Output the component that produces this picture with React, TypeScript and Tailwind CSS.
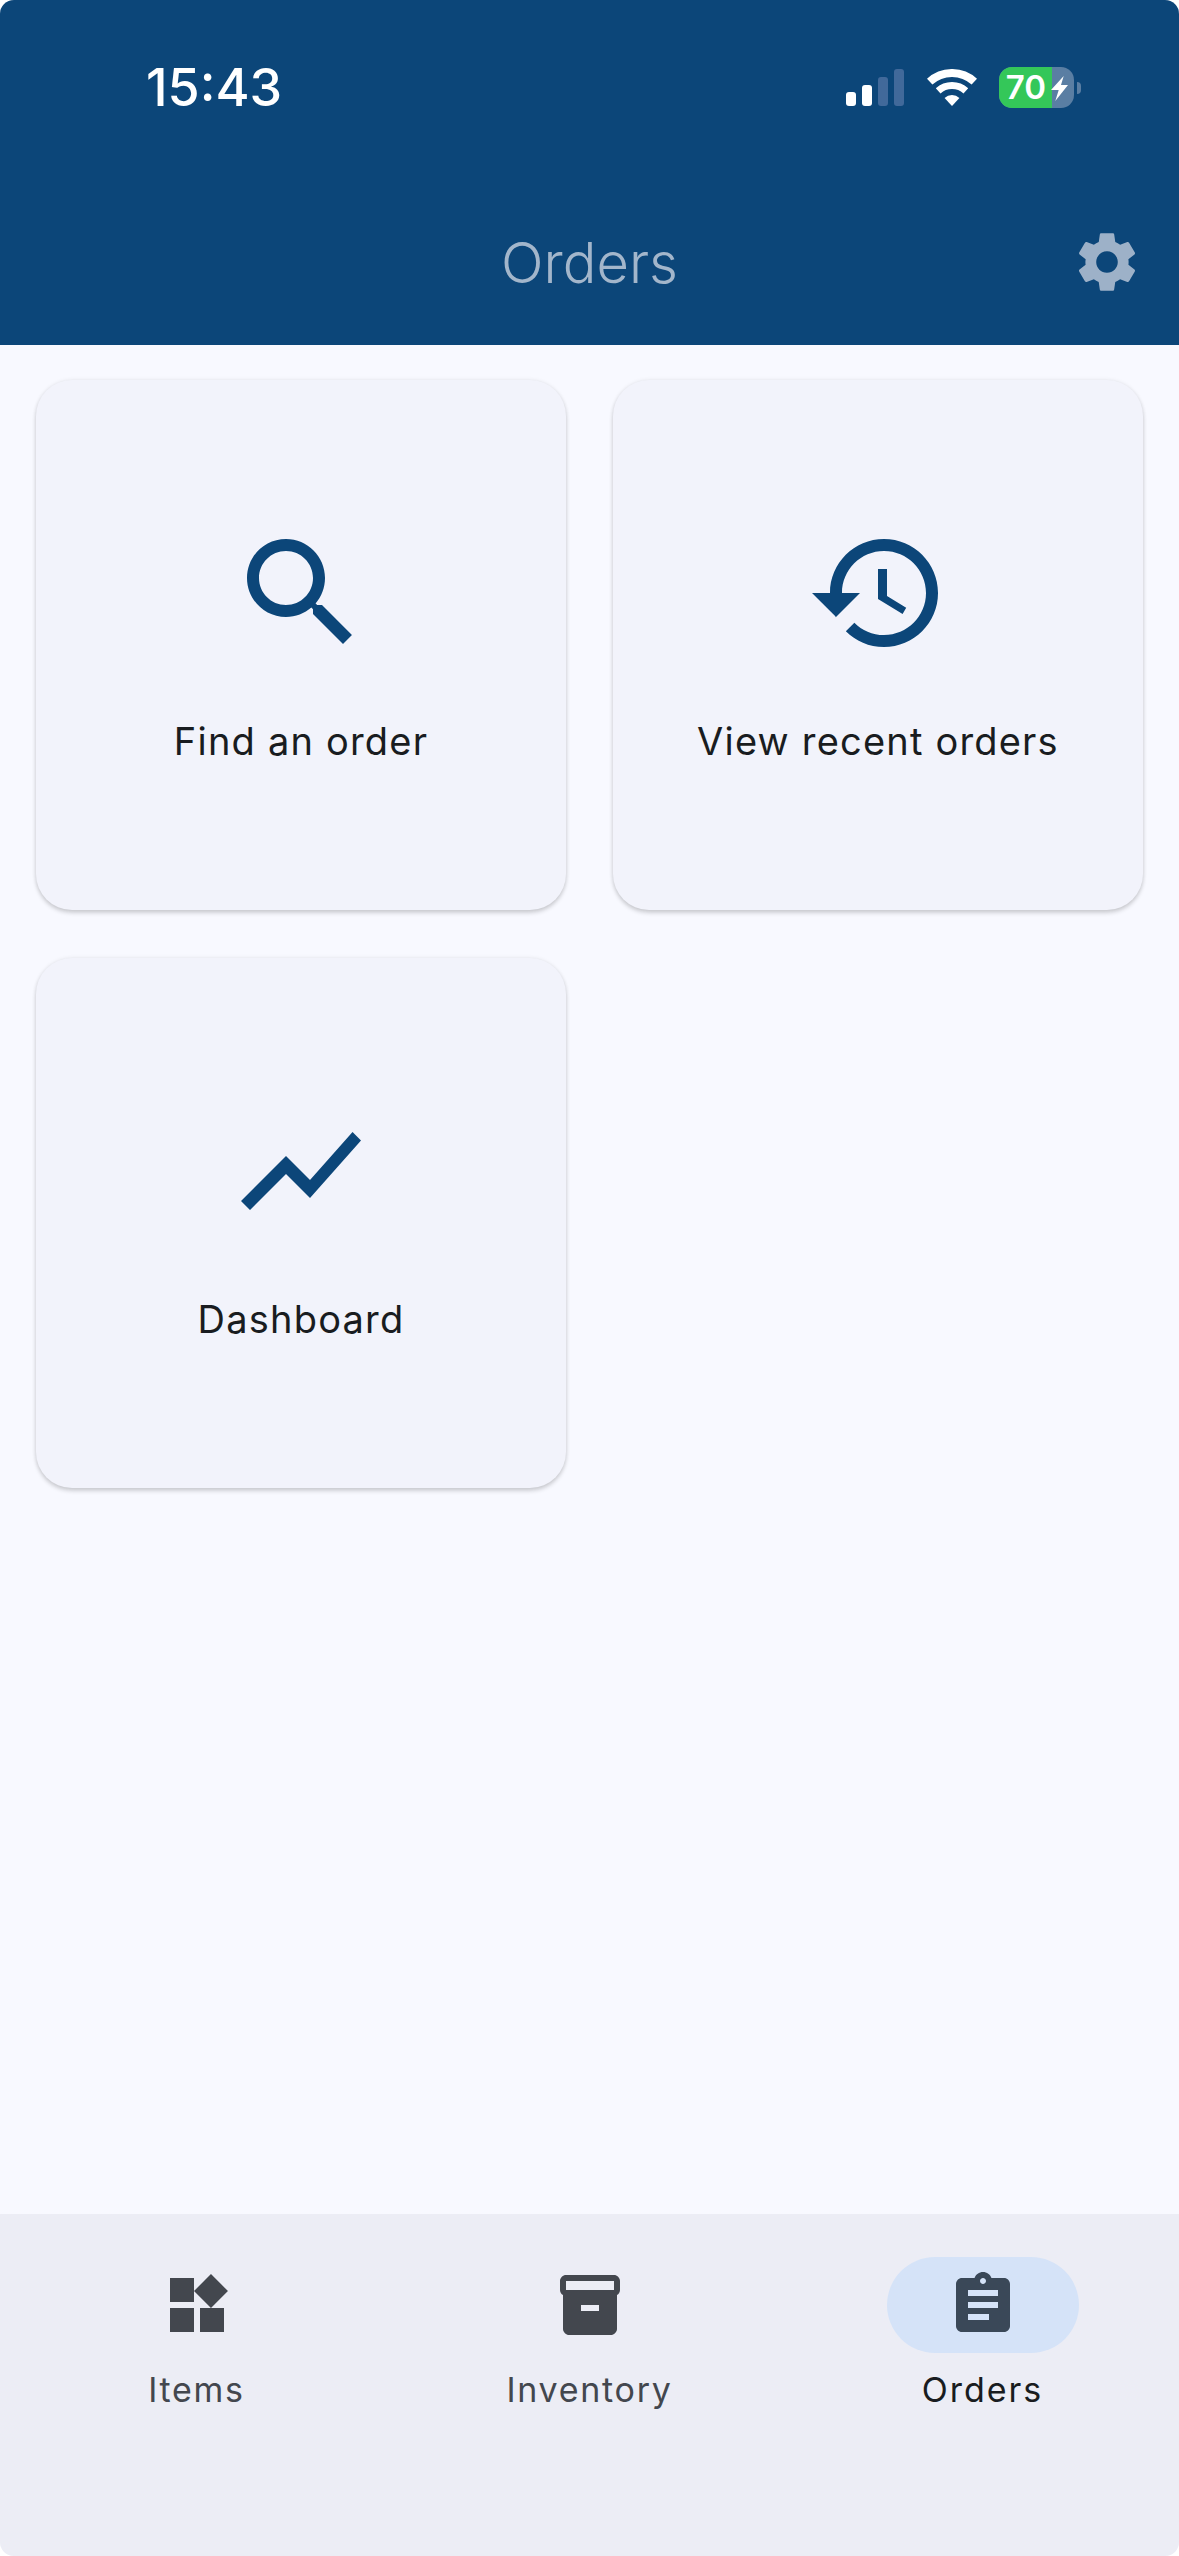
const BLUE = '#0C4679';

const HubIcon = ({ path, className }: { path: string; className: string }) => (
  <svg viewBox="0 0 24 24" className={className} fill="currentColor">
    <path d={path} />
  </svg>
);

const paths = {
  gear: 'M19.14 12.94c.04-.3.06-.61.06-.94 0-.32-.02-.64-.07-.94l2.03-1.58c.18-.14.23-.41.12-.61l-1.92-3.32c-.12-.22-.37-.29-.59-.22l-2.39.96c-.5-.38-1.03-.7-1.62-.94l-.36-2.54c-.04-.24-.24-.41-.48-.41h-3.84c-.24 0-.43.17-.47.41l-.36 2.54c-.59.24-1.13.57-1.62.94l-2.39-.96c-.22-.08-.47 0-.59.22L2.74 8.87c-.12.21-.08.47.12.61l2.03 1.58c-.05.3-.09.63-.09.94s.02.64.07.94l-2.03 1.58c-.18.14-.23.41-.12.61l1.92 3.32c.12.22.37.29.59.22l2.39-.96c.5.38 1.03.7 1.62.94l.36 2.54c.05.24.24.41.48.41h3.84c.24 0 .44-.17.47-.41l.36-2.54c.59-.24 1.13-.56 1.62-.94l2.39.96c.22.08.47 0 .59-.22l1.92-3.32c.12-.22.07-.47-.12-.61l-2.01-1.58zM12 15.6c-1.98 0-3.6-1.62-3.6-3.6s1.62-3.6 3.6-3.6 3.6 1.62 3.6 3.6-1.62 3.6-3.6 3.6z',
  search: 'M15.5 14h-.79l-.28-.27C15.41 12.59 16 11.11 16 9.5 16 5.91 13.09 3 9.5 3S3 5.91 3 9.5 5.91 16 9.5 16c1.61 0 3.09-.59 4.23-1.57l.27.28v.79l5 4.99L20.49 19l-4.99-5zm-6 0C7.01 14 5 11.99 5 9.5S7.01 5 9.5 5 14 7.01 14 9.5 11.99 14 9.5 14z',
  history: 'M13 3c-4.97 0-9 4.03-9 9H1l3.89 3.89.07.14L9 12H6c0-3.87 3.13-7 7-7s7 3.13 7 7-3.13 7-7 7c-1.93 0-3.68-.79-4.94-2.06l-1.42 1.42C8.27 19.99 10.51 21 13 21c4.97 0 9-4.03 9-9s-4.03-9-9-9zM12 8v5l4.1 2.5.6-1.05-3.2-1.95V8z',
  chart: 'M3.5 18.49l6-6.01 4 4L22 6.92l-1.41-1.41-7.09 7.97-4-4L2 16.99z',
  widgets: 'M13 13v8h8v-8h-8zM3 21h8v-8H3v8zM3 3v8h8V3H3zm13.66-1.31L11 7.34 16.66 13l5.66-5.66-5.66-5.65z',
  inventory: 'M20 2H4c-1 0-2 .9-2 2v3.01c0 .72.43 1.34 1 1.69V20c0 1.1 1.1 2 2 2h14c.9 0 2-.9 2-2V8.7c.57-.35 1-.97 1-1.69V4c0-1.1-1-2-2-2zm-5 12H9v-2h6v2zm5-7H4V4l16-.02V7z',
  assignment: 'M19 3h-4.18C14.4 1.84 13.3 1 12 1c-1.3 0-2.4.84-2.82 2H5c-1.1 0-2 .9-2 2v14c0 1.1.9 2 2 2h14c1.1 0 2-.9 2-2V5c0-1.1-.9-2-2-2zm-7 0c.55 0 1 .45 1 1s-.45 1-1 1-1-.45-1-1 .45-1 1-1zm2 14H7v-2h7v2zm3-4H7v-2h10v2zm0-4H7V7h10v2z',
};

const StatusBar = () => (
  <div className="flex h-[116px] items-center justify-between pl-[146px] pr-[98px] pt-[59px]">
    <span className="text-[52px] font-medium leading-[57px] text-white">15:43</span>
    <div className="flex items-center">
      <div className="flex h-[37px] items-end gap-[6px]">
        <div className="h-[14px] w-[10px] rounded-[3px] bg-white" />
        <div className="h-[21px] w-[10px] rounded-[3px] bg-white" />
        <div className="h-[29px] w-[10px] rounded-[3px] bg-[#41699A]" />
        <div className="h-[37px] w-[10px] rounded-[3px] bg-[#41699A]" />
      </div>
      <svg viewBox="0 0 50 37" className="ml-[23px] h-[37px] w-[50px]" fill="none" stroke="white">
        <path d="M2.7 12.67A33 33 0 0 1 47.3 12.67" strokeWidth="8" />
        <path d="M11.15 21.89A20.5 20.5 0 0 1 38.85 21.89" strokeWidth="7" />
        <path d="M25 37L17.57 28.89A11 11 0 0 1 32.43 28.89Z" fill="white" stroke="none" />
      </svg>
      <div className="relative ml-[22px] flex h-[41px] w-[75px] overflow-hidden rounded-[13px] bg-[#5A7EA3]">
        <div className="flex h-full w-[53px] items-center justify-center bg-[#34C759] pl-[1px] text-[33px] font-semibold leading-none text-white">
          70
        </div>
        <svg viewBox="0 0 17 25" className="absolute left-[52px] top-[9px] h-[25px] w-[17px]" fill="white">
          <path d="M12.7 0L0 14H7.7L4.3 25L17 9H10Z" />
        </svg>
      </div>
      <div className="ml-[3px] h-[12px] w-[4px] rounded-r-full bg-[#5A7EA3]" />
    </div>
  </div>
);

const Card = ({ icon, label }: { icon: string; label: string }) => (
  <div className="flex h-[530px] flex-col items-center rounded-[36px] bg-[#F2F3FB] pt-[141px] shadow-[0_3px_4px_rgba(0,0,0,0.16),0_0_4px_rgba(0,0,0,0.08)]">
    <HubIcon path={icon} className="h-[144px] w-[144px] text-[#0C4679]" />
    <span className="mt-[46px] text-[38px] leading-[60px] tracking-[1.2px] text-[#191C20]">{label}</span>
  </div>
);

const NavItem = ({ icon, label, active }: { icon: string; label: string; active?: boolean }) => (
  <div className="flex flex-col items-center pt-[43px]">
    <div className={`flex h-[96px] w-[192px] items-center justify-center rounded-full ${active ? 'bg-[#D5E3F8] text-[#3A4858]' : 'text-[#43474E]'}`}>
      <HubIcon path={icon} className="h-[72px] w-[72px]" />
    </div>
    <span className={`mt-[10px] text-[34px] leading-[54px] ${active ? 'tracking-[2px] text-[#191C20]' : 'tracking-[1.7px] text-[#43474E]'}`}>
      {label}
    </span>
  </div>
);

export default function App() {
  return (
    <div className="flex h-[2556px] w-[1179px] flex-col overflow-hidden rounded-[14px] bg-[#F8F9FF] font-['Inter',sans-serif]">
      <header className="h-[345px]" style={{ backgroundColor: BLUE }}>
        <StatusBar />
        <div className="grid grid-cols-[1fr_auto_1fr] items-center pt-[110px]">
          <div />
          <h1 className="text-[56px] font-light leading-[72px] text-[#A3B6CB]">Orders</h1>
          <div className="flex justify-end pr-[36px]">
            <HubIcon path={paths.gear} className="mb-[2px] h-[72px] w-[72px] text-[#9DB1C8]" />
          </div>
        </div>
      </header>
      <main className="grid flex-1 grid-cols-2 content-start gap-x-[47px] gap-y-[48px] px-[36px] pt-[35px]">
        <Card icon={paths.search} label="Find an order" />
        <Card icon={paths.history} label="View recent orders" />
        <Card icon={paths.chart} label="Dashboard" />
      </main>
      <nav className="grid h-[342px] grid-cols-3 bg-[#ECEDF5]">
        <NavItem icon={paths.widgets} label="Items" />
        <NavItem icon={paths.inventory} label="Inventory" />
        <NavItem icon={paths.assignment} label="Orders" active />
      </nav>
    </div>
  );
}
